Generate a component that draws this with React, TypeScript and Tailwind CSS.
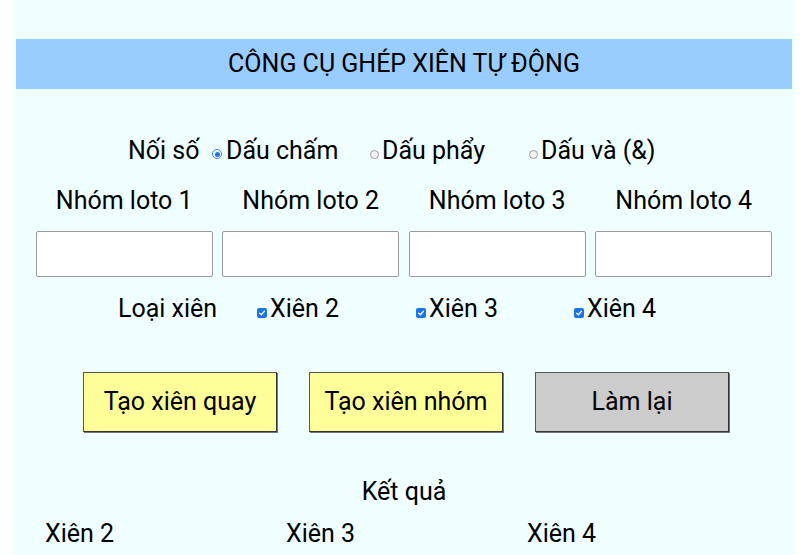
import React from "react";

function Radio({ checked }: { checked?: boolean }) {
  return checked ? (
    <span className="mt-[6px] mr-[4px] inline-block h-[10px] w-[10px] shrink-0 rounded-full border border-[#3b82f6] bg-white p-[1.5px]">
      <span className="block h-full w-full rounded-full bg-[#1a73e8]" />
    </span>
  ) : (
    <span className="mt-[6px] mr-[3px] inline-block h-[9px] w-[9px] shrink-0 rounded-full border border-[#9a9a9a] bg-[#f4f4f4]" />
  );
}

function Check() {
  return (
    <span className="mt-[7px] mr-[3px] inline-flex h-[10px] w-[10px] shrink-0 items-center justify-center rounded-[2px] bg-[#1a73e8]">
      <svg viewBox="0 0 10 10" className="h-[8px] w-[8px]">
        <path d="M2 5.2 L4.2 7.2 L8 2.8" fill="none" stroke="white" strokeWidth="1.6" strokeLinecap="round" strokeLinejoin="round" />
      </svg>
    </span>
  );
}

export default function App() {
  return (
    <div className="h-screen overflow-hidden bg-white text-[25px] leading-[28px] text-black" style={{ fontFamily: "Roboto, 'Noto Sans', sans-serif" }}>
      <div className="ml-[13px] mr-[5px] h-[555px] bg-[#f0ffff] px-[3px] pt-[39px]">
        <div className="flex h-[50px] items-center justify-center bg-[#99ccff]">
          CÔNG CỤ GHÉP XIÊN TỰ ĐỘNG
        </div>

        <div className="mt-[48px] flex h-[28px] items-center pl-[112px]">
          <div className="w-[84px]">Nối số</div>
          <div className="flex w-[158px] items-center">
            <Radio checked />
            <span>Dấu chấm</span>
          </div>
          <div className="flex w-[159px] items-center">
            <Radio />
            <span>Dấu phẩy</span>
          </div>
          <div className="flex items-center">
            <Radio />
            <span>Dấu và (&amp;)</span>
          </div>
        </div>

        <div className="mx-auto mt-[22px] grid w-[746px] grid-cols-4">
          {[1, 2, 3, 4].map((n) => (
            <div key={n} className="flex flex-col items-center">
              <div className="h-[28px]">Nhóm loto {n}</div>
              <input
                type="text"
                className="mt-[16px] h-[46px] w-[177px] rounded-[2px] border border-[#9a9a9a] bg-white px-2 outline-none"
              />
            </div>
          ))}
        </div>

        <div className="mt-[18px] flex h-[28px] items-center pl-[102px]">
          <div className="w-[139px]">Loại xiên</div>
          <div className="flex w-[159px] items-center">
            <Check />
            <span>Xiên 2</span>
          </div>
          <div className="flex w-[158px] items-center">
            <Check />
            <span>Xiên 3</span>
          </div>
          <div className="flex items-center">
            <Check />
            <span>Xiên 4</span>
          </div>
        </div>

        <div className="mt-[49px] flex gap-[32px] pl-[67px]">
          <button className="h-[60px] w-[194px] border border-[#555] border-r-[#333] border-b-[#333] bg-[#ffff99] shadow-[1px_1px_0_#777]">
            Tạo xiên quay
          </button>
          <button className="h-[60px] w-[194px] border border-[#555] border-r-[#333] border-b-[#333] bg-[#ffff99] shadow-[1px_1px_0_#777]">
            Tạo xiên nhóm
          </button>
          <button className="h-[60px] w-[194px] border border-[#555] border-r-[#333] border-b-[#333] bg-[#cccccc] shadow-[1px_1px_0_#777]">
            Làm lại
          </button>
        </div>

        <div className="mt-[46px] text-center">Kết quả</div>

        <div className="mt-[14px] grid w-[752px] grid-cols-3 pl-[29px]">
          <div>Xiên 2</div>
          <div>Xiên 3</div>
          <div>Xiên 4</div>
        </div>
      </div>
    </div>
  );
}
